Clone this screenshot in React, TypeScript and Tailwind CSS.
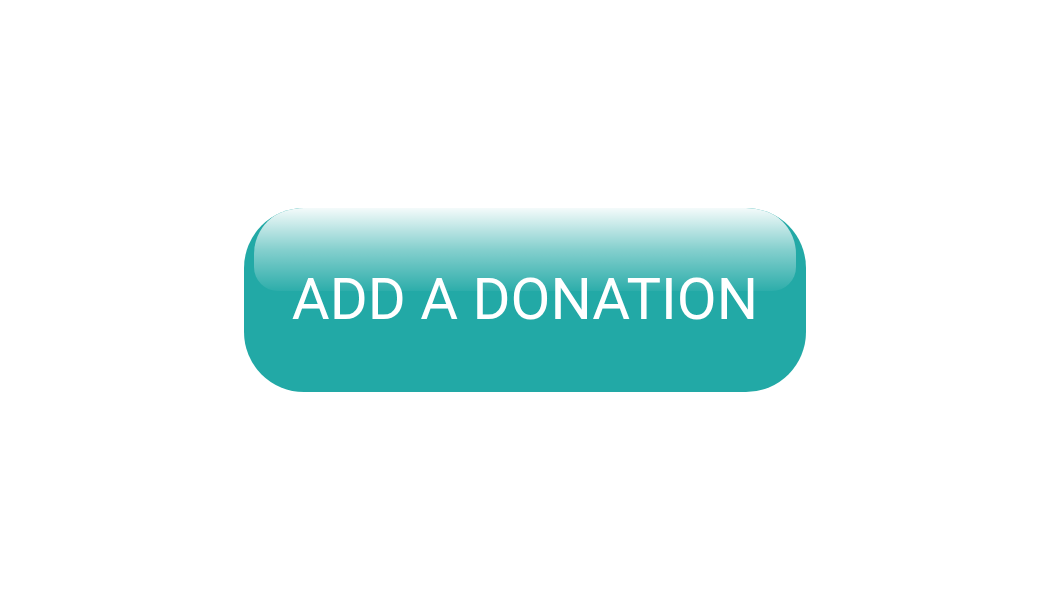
export default function App() {
  return (
    <div className="flex h-[600px] w-full items-center justify-center bg-white">
      <button
        className="relative flex h-[184px] w-[562px] items-center justify-center overflow-hidden rounded-[60px] bg-[#22a9a6] text-white"
        style={{ fontFamily: 'Roboto, "Noto Sans", sans-serif' }}
      >
        <span className="pointer-events-none absolute left-[10px] right-[10px] top-0 h-[83px] rounded-t-[46px] rounded-b-[24px] bg-gradient-to-b from-white/95 via-white/45 to-white/5" />
        <span className="relative -mt-[3px] text-[58px] leading-none">ADD A DONATION</span>
      </button>
    </div>
  )
}
